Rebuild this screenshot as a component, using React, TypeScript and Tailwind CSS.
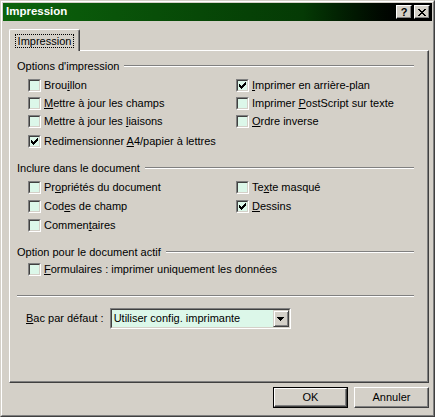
import React from 'react';

function Box({ checked }: { checked?: boolean }) {
  return (
    <span className="block w-[13px] h-[13px] shrink-0 border border-t-[#808080] border-l-[#808080] border-r-white border-b-white">
      <span className="flex items-center justify-center w-full h-full border border-t-[#404040] border-l-[#404040] border-r-[#d4d0c8] border-b-[#d4d0c8] bg-[#dcf7e9]">
        {checked && (
          <svg width="7" height="7" viewBox="0 0 7 7" shapeRendering="crispEdges">
            <path d="M6 0h1v3h-1v1h-1v1h-1v1h-1v1h-1v-1h-1v-1h-1v-3h1v1h1v1h1v-1h1v-1h1z" fill="#000" />
          </svg>
        )}
      </span>
    </span>
  );
}

function Check({ label, checked, h = 'h-[18px]' }: { label: React.ReactNode; checked?: boolean; h?: string }) {
  return (
    <div className={`flex items-center gap-[3px] ${h}`}>
      <Box checked={checked} />
      <span className="whitespace-nowrap">{label}</span>
    </div>
  );
}

function Header({ title }: { title: string }) {
  return (
    <div className="flex items-center h-[14px] gap-[5px]">
      <span className="whitespace-nowrap">{title}</span>
      <div className="flex-1 h-[2px] border-t border-t-[#808080] border-b border-b-white" />
    </div>
  );
}

function Btn({ children, def }: { children: React.ReactNode; def?: boolean }) {
  return (
    <div className={`w-[75px] h-[21px] ${def ? 'border border-black' : ''}`}>
      <div className="w-full h-full flex items-center justify-center border border-t-white border-l-white border-r-[#404040] border-b-[#404040] shadow-[inset_-1px_-1px_#808080]">
        {children}
      </div>
    </div>
  );
}

export default function App() {
  return (
    <div className="w-[435px] h-[417px] bg-[#d4d0c8] border border-t-[#d4d0c8] border-l-[#d4d0c8] border-r-[#404040] border-b-[#404040] font-['Liberation_Sans',Arial,sans-serif] text-[11px] text-black leading-none">
      <div className="h-full border border-t-white border-l-white border-r-[#808080] border-b-[#808080] p-px flex flex-col">
        {/* title bar */}
        <div className="h-[18px] flex items-center bg-linear-to-r from-[#0c640c] via-[#053a05] via-70% to-black pl-[3px] pr-[2px]">
          <span className="flex-1 text-white font-bold text-[11.5px]">Impression</span>
          <div className="w-[16px] h-[14px] flex items-center justify-center bg-[#d4d0c8] border border-t-white border-l-white border-r-black border-b-black shadow-[inset_-1px_-1px_#808080] font-bold text-[11px]">?</div>
          <div className="w-[16px] h-[14px] ml-[2px] flex items-center justify-center bg-[#d4d0c8] border border-t-white border-l-white border-r-black border-b-black shadow-[inset_-1px_-1px_#808080]">
            <svg width="8" height="7" viewBox="0 0 8 7" shapeRendering="crispEdges">
              <path d="M0 0h2v1h1v1h2v-1h1v-1h2v1h-1v1h-1v1h-1v1h1v1h1v1h1v1h-2v-1h-1v-1h-2v1h-1v1h-2v-1h1v-1h1v-1h1v-1h-1v-1h-1v-1h-1z" fill="#000" />
            </svg>
          </div>
        </div>

        {/* body */}
        <div className="flex-1 flex flex-col pl-[6px] pr-[3px] pt-[8px]">
          <div className="flex">
            <div className="relative z-10 -mb-px w-[71px] h-[22px] bg-[#d4d0c8] border-t border-l border-t-white border-l-white border-r border-r-[#404040] shadow-[inset_-1px_0_#808080] rounded-tl-[2px] rounded-tr-[2px] flex items-start justify-center pt-[4px]">
              <span className="border border-dotted border-black px-[2px] h-[14px] flex items-center">Impression</span>
            </div>
          </div>

          <div className="w-[420px] h-[333px] border border-t-white border-l-white border-r-[#404040] border-b-[#404040] shadow-[inset_-1px_-1px_#808080] pl-[7px] pr-[14px] pt-[8px] flex flex-col">
            <Header title="Options d'impression" />
            <div className="grid grid-cols-[208px_1fr] mt-[3px] pl-[11px]">
              <div className="flex flex-col">
                <Check label={<>Brou<u>i</u>llon</>} />
                <Check label={<><u>M</u>ettre à jour les champs</>} />
                <Check label={<>Mettre à jour les <u>l</u>iaisons</>} />
                <div className="mt-[2px]">
                  <Check checked label={<>Redimensionner <u>A</u>4/papier à lettres</>} />
                </div>
              </div>
              <div className="flex flex-col">
                <Check checked label={<><u>I</u>mprimer en arrière-plan</>} />
                <Check label={<>Imprimer <u>P</u>ostScript sur texte</>} />
                <Check label={<><u>O</u>rdre inverse</>} />
              </div>
            </div>

            <div className="mt-[11px]">
              <Header title="Inclure dans le document" />
            </div>
            <div className="grid grid-cols-[208px_1fr] mt-[3px] pl-[11px]">
              <div className="flex flex-col">
                <Check h="h-[19px]" label={<>Pr<u>o</u>priétés du document</>} />
                <Check h="h-[19px]" label={<>Cod<u>e</u>s de champ</>} />
                <Check h="h-[19px]" label={<>Commen<u>t</u>aires</>} />
              </div>
              <div className="flex flex-col">
                <Check h="h-[19px]" label={<>Te<u>x</u>te masqué</>} />
                <Check h="h-[19px]" checked label={<><u>D</u>essins</>} />
              </div>
            </div>

            <div className="mt-[10px]">
              <Header title="Option pour le document actif" />
            </div>
            <div className="mt-[1px] pl-[11px]">
              <Check label={<><u>F</u>ormulaires : imprimer uniquement les données</>} />
            </div>

            <div className="mt-[17px] h-[2px] border-t border-t-[#808080] border-b border-b-white" />

            <div className="mt-[11px] flex items-center pl-[9px] gap-[6px]">
              <span className="whitespace-nowrap"><u>B</u>ac par défaut :</span>
              <div className="w-[181px] h-[21px] border border-t-[#808080] border-l-[#808080] border-r-white border-b-white">
                <div className="w-full h-full flex items-center border border-t-[#404040] border-l-[#404040] border-r-[#d4d0c8] border-b-[#d4d0c8] bg-[#dcf7e9]">
                  <span className="flex-1 pl-[2px] whitespace-nowrap">Utiliser config. imprimante</span>
                  <div className="w-[16px] h-[17px] bg-[#d4d0c8] border border-t-[#d4d0c8] border-l-[#d4d0c8] border-r-[#404040] border-b-[#404040] shadow-[inset_1px_1px_white,inset_-1px_-1px_#808080] flex items-center justify-center">
                    <svg width="7" height="4" viewBox="0 0 7 4" shapeRendering="crispEdges">
                      <path d="M0 0h7v1h-1v1h-1v1h-1v1h-1v-1h-1v-1h-1v-1h-1z" fill="#000" />
                    </svg>
                  </div>
                </div>
              </div>
            </div>
          </div>

          <div className="flex justify-end gap-[6px] mt-[4px]">
            <Btn def>OK</Btn>
            <Btn>Annuler</Btn>
          </div>
        </div>
      </div>
    </div>
  );
}
